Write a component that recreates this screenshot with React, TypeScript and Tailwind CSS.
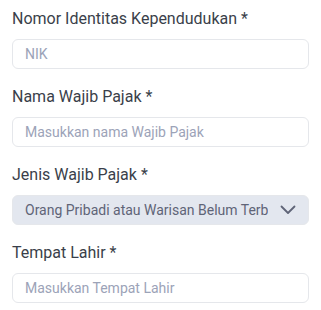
const INPUT_CLASS = `w-full h-[30px] rounded-md border border-gray-200 bg-white px-3 text-sm
  text-gray-700 placeholder:text-[#9ca3b8] focus:outline-none`;

function Field({ label, children }: { label: string; children: React.ReactNode }) {
  return (
    <div className="flex flex-col gap-2">
      <label className="text-base leading-6 text-[#3a3f4a]">{label}</label>
      {children}
    </div>
  );
}

export default function App() {
  return (
    <div
      className="w-[321px] h-[310px] bg-white px-3 pt-[7px] flex flex-col gap-4"
      style={{ fontFamily: 'Roboto, "Noto Sans", sans-serif' }}
    >
      <Field label="Nomor Identitas Kependudukan *">
        <input className={INPUT_CLASS} placeholder="NIK" />
      </Field>

      <Field label="Nama Wajib Pajak *">
        <input className={INPUT_CLASS} placeholder="Masukkan nama Wajib Pajak" />
      </Field>

      <Field label="Jenis Wajib Pajak *">
        <div className="w-full h-[30px] rounded-md border border-gray-200 bg-[#e3e7ef] pl-3 pr-3 flex items-center gap-3 text-sm text-[#5f6477]">
          <span className="flex-1 min-w-0 whitespace-nowrap overflow-hidden">
            Orang Pribadi atau Warisan Belum Terbagi
          </span>
          <svg width="16" height="10" viewBox="0 0 16 10" fill="none" className="shrink-0">
            <path d="M1.5 1.5 8 8l6.5-6.5" stroke="#5f6477" strokeWidth="1.8" strokeLinecap="round" strokeLinejoin="round" />
          </svg>
        </div>
      </Field>

      <Field label="Tempat Lahir *">
        <input className={INPUT_CLASS} placeholder="Masukkan Tempat Lahir" />
      </Field>
    </div>
  );
}
